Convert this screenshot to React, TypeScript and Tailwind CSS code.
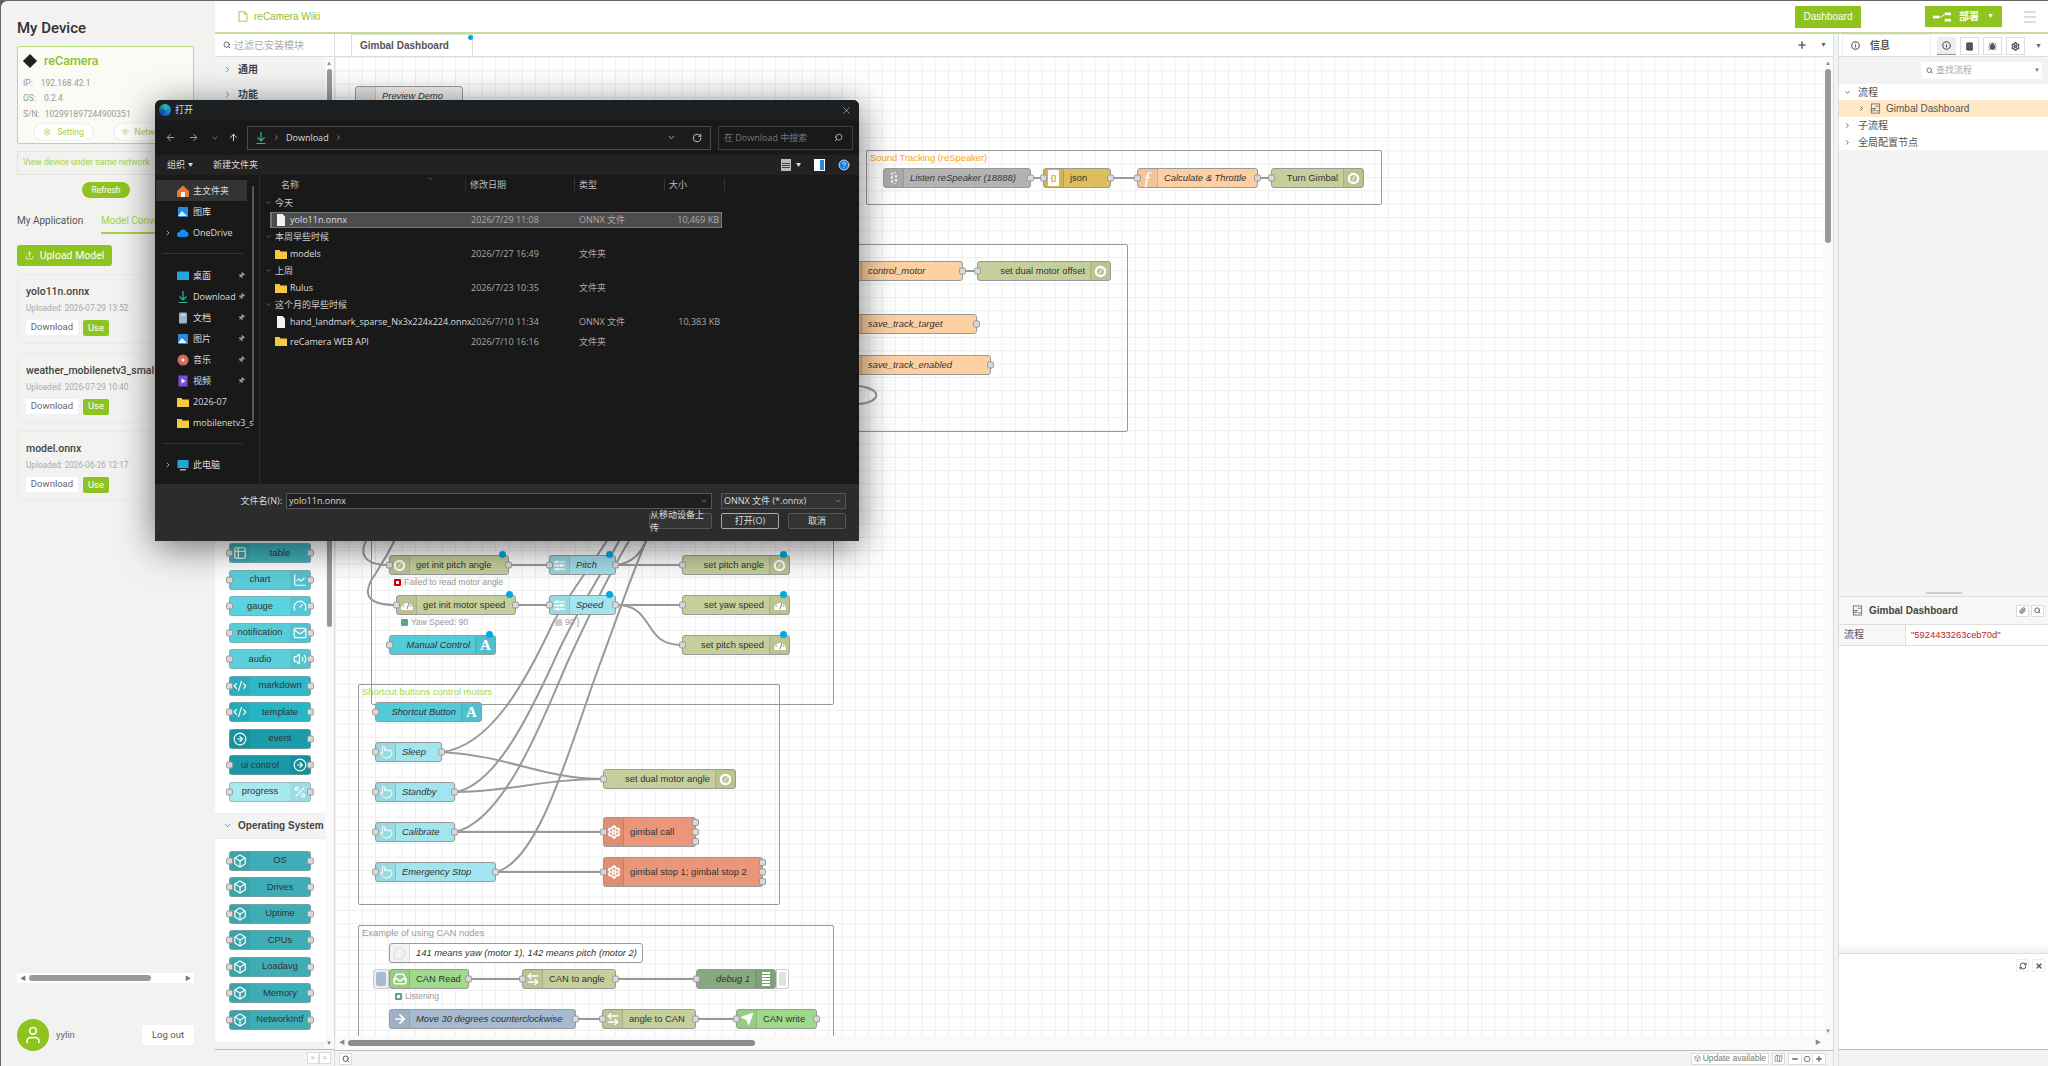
import React from "react";
import {
  ArrowLeft, ArrowLeftRight, ArrowRight, ArrowUp, Book, Box, Bug, ChartLine, ChevronDown, ChevronRight,
  CircleArrowRight, CircleHelp, CodeXml, Gauge, Inbox, Info, Mail, Map, MessageCircle, Minus, Paperclip, Percent,
  Pin, Plus, Pointer, RefreshCw, RotateCw, Search, Send, Settings, Table2, Upload, User, Volume2, Wifi, X,
} from "lucide-react";

const ORIGIN_X = 334;
const ORIGIN_Y = 56;

type IconName = "fn" | "json" | "mic" | "dial" | "gauge" | "sliders" | "text" | "hand" | "gear" | "swap" | "inbox" | "send" | "inject" | "comment" | "debug" | "none";

interface NodeDef {
  x: number;
  y: number;
  w: number;
  h?: number;
  label: string;
  color: string;
  icon: IconName;
  right?: boolean;
  italic?: boolean;
  hasIn?: boolean;
  outs?: number;
  changed?: boolean;
  dark?: boolean;
}

const nodes: NodeDef[] = [
  { x: 354, y: 85, w: 108, label: "Preview Demo", color: "#eeeeee", icon: "comment", italic: true, hasIn: false, outs: 0 },
  { x: 882, y: 167, w: 148, label: "Listen reSpeaker (18888)", color: "#b3b3b3", icon: "mic", italic: true, hasIn: false, outs: 1 },
  { x: 1042, y: 167, w: 68, label: "json", color: "#debd5c", icon: "json", hasIn: true, outs: 1 },
  { x: 1136, y: 167, w: 121, label: "Calculate & Throttle", color: "#fdd0a2", icon: "fn", italic: true, hasIn: true, outs: 1 },
  { x: 1270, y: 167, w: 93, label: "Turn Gimbal", color: "#c5cf9b", icon: "dial", right: true, hasIn: true, outs: 0 },
  { x: 840, y: 260, w: 122, label: "control_motor", color: "#fdd0a2", icon: "fn", italic: true, hasIn: true, outs: 1 },
  { x: 976, y: 260, w: 134, label: "set dual motor offset", color: "#c5cf9b", icon: "dial", right: true, hasIn: true, outs: 0 },
  { x: 840, y: 313, w: 136, label: "save_track_target", color: "#fdd0a2", icon: "fn", italic: true, hasIn: true, outs: 1 },
  { x: 840, y: 354, w: 150, label: "save_track_enabled", color: "#fdd0a2", icon: "fn", italic: true, hasIn: true, outs: 1 },
  { x: 388, y: 554, w: 120, label: "get init pitch angle", color: "#c5cf9b", icon: "dial", hasIn: true, outs: 1, changed: true },
  { x: 548, y: 554, w: 67, label: "Pitch", color: "#a2dfea", icon: "sliders", italic: true, hasIn: true, outs: 1, changed: true },
  { x: 681, y: 554, w: 108, label: "set pitch angle", color: "#c5cf9b", icon: "dial", right: true, hasIn: true, outs: 0, changed: true },
  { x: 395, y: 594, w: 120, label: "get init motor speed", color: "#c5cf9b", icon: "gauge", hasIn: true, outs: 1, changed: true },
  { x: 548, y: 594, w: 67, label: "Speed", color: "#a2e5ee", icon: "sliders", italic: true, hasIn: true, outs: 1, changed: true },
  { x: 681, y: 594, w: 108, label: "set yaw speed", color: "#c5cf9b", icon: "gauge", right: true, hasIn: true, outs: 0, changed: true },
  { x: 388, y: 634, w: 107, label: "Manual Control", color: "#54cbd9", icon: "text", right: true, italic: true, hasIn: true, outs: 0, changed: true },
  { x: 681, y: 634, w: 108, label: "set pitch speed", color: "#c5cf9b", icon: "gauge", right: true, hasIn: true, outs: 0, changed: true },
  { x: 374, y: 701, w: 107, label: "Shortcut Button", color: "#54cbd9", icon: "text", right: true, italic: true, hasIn: true, outs: 0 },
  { x: 374, y: 741, w: 67, label: "Sleep", color: "#a2e5ee", icon: "hand", italic: true, hasIn: true, outs: 1 },
  { x: 374, y: 781, w: 80, label: "Standby", color: "#a2e5ee", icon: "hand", italic: true, hasIn: true, outs: 1 },
  { x: 374, y: 821, w: 80, label: "Calibrate", color: "#a2e5ee", icon: "hand", italic: true, hasIn: true, outs: 1 },
  { x: 374, y: 861, w: 121, label: "Emergency Stop", color: "#a2e5ee", icon: "hand", italic: true, hasIn: true, outs: 1 },
  { x: 602, y: 768, w: 133, label: "set dual motor angle", color: "#c5cf9b", icon: "dial", right: true, hasIn: true, outs: 0 },
  { x: 602, y: 816, w: 93, h: 30, label: "gimbal call", color: "#e9967a", icon: "gear", hasIn: true, outs: 3 },
  { x: 602, y: 856, w: 160, h: 30, label: "gimbal stop 1; gimbal stop 2", color: "#e9967a", icon: "gear", hasIn: true, outs: 3 },
  { x: 388, y: 942, w: 254, label: "141 means yaw (motor 1), 142 means pitch (motor 2)", color: "#ffffff", icon: "comment", italic: true, hasIn: false, outs: 0 },
  { x: 388, y: 968, w: 80, label: "CAN Read", color: "#9fd98a", icon: "inbox", hasIn: false, outs: 1 },
  { x: 521, y: 968, w: 94, label: "CAN to angle", color: "#c5cf9b", icon: "swap", hasIn: true, outs: 1 },
  { x: 695, y: 968, w: 80, label: "debug 1", color: "#87a980", icon: "debug", right: true, italic: true, hasIn: true, outs: 0 },
  { x: 388, y: 1008, w: 187, label: "Move 30 degrees counterclockwise", color: "#a6bbcf", icon: "inject", italic: true, hasIn: false, outs: 1 },
  { x: 601, y: 1008, w: 94, label: "angle to CAN", color: "#c5cf9b", icon: "swap", hasIn: true, outs: 1 },
  { x: 735, y: 1008, w: 81, label: "CAN write", color: "#9fd98a", icon: "send", hasIn: true, outs: 1 },
];

const wires = [
  "M1030 177H1042", "M1110 177H1136", "M1257 177H1270", "M962 270H976",
  "M858 385C880 388 882 400 858 403",
  "M508 564H548", "M515 604H548", "M615 564H681", "M615 604H681",
  "M615 604C655 604 640 644 681 644",
  "M388 564C362 564 358 552 366 538",
  "M395 604C362 604 362 590 375 572C382 560 388 552 394 538",
  "M615 564C632 562 640 552 646 538",
  "M441 751C490 745 525 680 552 622C570 590 590 565 607 538",
  "M454 791C495 785 530 710 553 660C575 610 600 575 619 538",
  "M454 831C505 820 545 710 567 660C590 610 610 570 629 538",
  "M495 871C540 860 570 740 600 660C615 620 630 575 646 538",
  "M441 751C510 755 540 778 602 778", "M454 791C510 791 540 778 602 778",
  "M454 831H602", "M495 871H602",
  "M468 978H521", "M615 978H695", "M575 1018H601", "M695 1018H735",
];

const groups = [
  { x: 865, y: 149, w: 516, h: 55, label: "Sound Tracking (reSpeaker)", color: "text-[#f5a623]" },
  { x: 340, y: 243, w: 787, h: 188, label: "", color: "" },
  { x: 370, y: 500, w: 463, h: 204, label: "", color: "" },
  { x: 357, y: 683, w: 422, h: 221, label: "Shortcut buttons control motors", color: "text-[#a5d655]" },
  { x: 357, y: 924, w: 476, h: 140, label: "Example of using CAN nodes", color: "text-[#999999]" },
];

const statuses = [
  { x: 393, y: 580, square: "bg-[#ffffff] border-2 border-[#cc0000]", label: "Failed to read motor angle" },
  { x: 400, y: 620, square: "bg-[#5a8]", label: "Yaw Speed: 90" },
  { x: 554, y: 620, square: "bg-[#cccccc]", label: "90 ]" },
  { x: 394, y: 994, square: "bg-white border-2 border-[#5a8]", label: "Listening" },
];

function Dial() {
  return (
    <svg viewBox="0 0 14 14" className="h-[13px] w-[13px]">
      <circle cx="7" cy="7" r="5" fill="none" stroke="#fff" strokeWidth="2.4" />
      <path d="M5.5 9.5 8.5 4.5" stroke="#fff" strokeWidth="1" />
    </svg>
  );
}

function SpeedGauge() {
  return (
    <svg viewBox="0 0 14 14" className="h-[14px] w-[14px]">
      <path d="M1 11a6 6 0 1 1 12 0l-1 1H2z" fill="#fff" />
      <path d="M7 11 9 5" stroke="#999" strokeWidth="1.2" />
      <circle cx="3.5" cy="8" r=".8" fill="#999" />
      <circle cx="10.5" cy="8" r=".8" fill="#999" />
    </svg>
  );
}

function Sliders() {
  return (
    <svg viewBox="0 0 14 14" className="h-[13px] w-[13px]" stroke="#fff" strokeWidth="1.4">
      <path d="M1 3h12M1 7h12M1 11h12" />
      <path d="M4 1.5v3M9 5.5v3M5 9.5v3" strokeWidth="2.4" />
    </svg>
  );
}

function NodeIcon({ icon }: { icon: IconName }) {
  const cls = "h-[14px] w-[14px] text-white";
  switch (icon) {
    case "fn":
      return <span className="font-['Liberation_Serif',serif] text-[19px] italic leading-none text-white">ƒ</span>;
    case "json":
      return <span className="flex h-[16px] w-[11px] items-center justify-center rounded-[1px] bg-white text-[8px] font-bold text-[#c9a540]">{"{}"}</span>;
    case "mic":
      return <span className="h-[12px] w-[6px] rounded-full border-x-2 border-dotted border-white" />;
    case "dial":
      return <Dial />;
    case "gauge":
      return <SpeedGauge />;
    case "sliders":
      return <Sliders />;
    case "text":
      return <span className="font-['Liberation_Serif',serif] text-[15px] font-bold leading-none text-white">A</span>;
    case "hand":
      return <Pointer className={cls} strokeWidth={1.6} />;
    case "gear":
      return <Settings className={cls} strokeWidth={3} />;
    case "swap":
      return <ArrowLeftRight className={cls} strokeWidth={2.6} />;
    case "inbox":
      return <Inbox className={cls} strokeWidth={2.6} />;
    case "send":
      return <Send className={cls} fill="#fff" strokeWidth={1} />;
    case "inject":
      return <ArrowRight className={cls} strokeWidth={3} />;
    case "comment":
      return <MessageCircle className="h-[13px] w-[13px] text-[#dddddd]" />;
    case "debug":
      return (
        <span className="flex flex-col gap-[1.5px]">
          {[0, 1, 2, 3, 4].map((i) => (
            <span key={i} className="h-[1.5px] w-[8px] bg-white" />
          ))}
        </span>
      );
    default:
      return null;
  }
}

function Port({ className }: { className: string }) {
  return <span className={`absolute h-[7px] w-[7px] rounded-[2px] border border-[#999999] bg-[#d9d9d9] ${className}`} />;
}

function FlowNode({ node }: { node: NodeDef }) {
  const h = node.h ?? 20;
  const outs = node.outs ?? 0;
  const icon = (
    <span className={`flex h-full w-[20px] shrink-0 items-center justify-center bg-black/5 ${node.right ? "border-l" : "border-r"} border-black/10`}>
      <NodeIcon icon={node.icon} />
    </span>
  );
  return (
    <div
      className="absolute flex items-center rounded-[3px] border border-[#999999]"
      style={{ left: node.x - ORIGIN_X, top: node.y - ORIGIN_Y, width: node.w, height: h, backgroundColor: node.color }}
    >
      {!node.right && icon}
      <span className={`flex-1 truncate whitespace-nowrap text-[9.4px] text-[#333333] ${node.italic ? "italic" : ""} ${node.right ? "pr-[5px] text-right" : "pl-[6px]"}`}>
        {node.label}
      </span>
      {node.right && icon}
      {node.hasIn && <Port className="left-[-4px] top-1/2 -translate-y-1/2" />}
      {outs === 1 && <Port className="right-[-4px] top-1/2 -translate-y-1/2" />}
      {outs === 3 && (
        <>
          <Port className="right-[-4px] top-[1px]" />
          <Port className="right-[-4px] top-1/2 -translate-y-1/2" />
          <Port className="right-[-4px] bottom-[1px]" />
        </>
      )}
      {node.changed && <span className="absolute right-[2px] top-[-5px] h-[7px] w-[7px] rounded-full bg-[#00a8e8]" />}
    </div>
  );
}

function Canvas() {
  return (
    <div className="relative flex-1 overflow-hidden bg-white bg-[linear-gradient(#eeeeee_1px,transparent_1px),linear-gradient(90deg,#eeeeee_1px,transparent_1px)] bg-[size:13.34px_13.34px]">
      {groups.map((g) => (
        <div
          key={`${g.x}-${g.y}`}
          className="absolute rounded-[2px] border border-[#999999] px-[3px] text-[9.4px] leading-[14px]"
          style={{ left: g.x - ORIGIN_X, top: g.y - ORIGIN_Y, width: g.w, height: g.h }}
        >
          <span className={g.color}>{g.label}</span>
        </div>
      ))}
      <svg className="absolute left-0 top-0" width="1488" height="980" viewBox={`${ORIGIN_X} ${ORIGIN_Y} 1488 980`} fill="none" stroke="#999999" strokeWidth="2">
        {wires.map((d) => (
          <path key={d} d={d} />
        ))}
      </svg>
      {nodes.map((n) => (
        <FlowNode key={n.label + n.x} node={n} />
      ))}
      {statuses.map((s) => (
        <div key={s.label} className="absolute flex items-center gap-[3px] text-[8.5px] text-[#999999]" style={{ left: s.x - ORIGIN_X, top: s.y - ORIGIN_Y - 5 }}>
          <span className={`h-[7px] w-[7px] rounded-[1px] ${s.square}`} />
          {s.label}
        </div>
      ))}
      <span className="absolute left-[38px] top-[912px] h-[20px] w-[16px] rounded-l-[3px] border border-[#cccccc] bg-[#eeeeee] p-[2px]">
        <span className="block h-full w-full rounded-[2px] bg-[#a6bbcf]" />
      </span>
      <span className="absolute left-[441px] top-[912px] h-[20px] w-[13px] rounded-r-[3px] border border-[#cccccc] bg-white p-[2px]">
        <span className="block h-full w-full rounded-[2px] bg-[#dbe5d8]" />
      </span>
    </div>
  );
}

const paletteA = [
  { label: "table", color: "bg-[#3fb0bb]", Icon: Table2, left: true, ins: true },
  { label: "chart", color: "bg-[#5accd8]", Icon: ChartLine, left: false, ins: true },
  { label: "gauge", color: "bg-[#5ad2df]", Icon: Gauge, left: false, ins: true },
  { label: "notification", color: "bg-[#55ced9]", Icon: Mail, left: false, ins: true },
  { label: "audio", color: "bg-[#5bcfdb]", Icon: Volume2, left: false, ins: true },
  { label: "markdown", color: "bg-[#2fb7c8]", Icon: CodeXml, left: true, ins: true },
  { label: "template", color: "bg-[#25b5c4]", Icon: CodeXml, left: true, ins: true },
  { label: "event", color: "bg-[#1b9aa9]", Icon: CircleArrowRight, left: true, ins: false },
  { label: "ui control", color: "bg-[#1898a8]", Icon: CircleArrowRight, left: false, ins: true },
  { label: "progress", color: "bg-[#a8e8ef]", Icon: Percent, left: false, ins: true },
];

const paletteB = ["OS", "Drives", "Uptime", "CPUs", "Loadavg", "Memory", "NetworkIntf"];

function PaletteNode({ label, color, Icon, left, ins }: { label: string; color: string; Icon: typeof Box; left: boolean; ins: boolean }) {
  const icon = (
    <span className={`flex h-full w-[20px] shrink-0 items-center justify-center bg-black/5 ${left ? "rounded-l-[3px]" : "rounded-r-[3px]"}`}>
      <Icon className="h-[14px] w-[14px] text-white" strokeWidth={2} />
    </span>
  );
  return (
    <div className={`relative mx-[14px] flex h-[20px] w-[82px] shrink-0 items-center rounded-[3px] border border-[#999999]/60 ${color}`}>
      {left && icon}
      <span className="flex-1 whitespace-nowrap text-center text-[9.4px] text-[#333333]">{label}</span>
      {!left && icon}
      {ins && <Port className="left-[-4px] top-1/2 -translate-y-1/2" />}
      <Port className="right-[-4px] top-1/2 -translate-y-1/2" />
    </div>
  );
}

function PaletteHeader({ label, open }: { label: string; open?: boolean }) {
  const Chevron = open ? ChevronDown : ChevronRight;
  return (
    <div className="flex h-[26px] shrink-0 items-center gap-[6px] border-y border-[#eeeeee] bg-[#f3f3f3] pl-[8px] text-[10px] font-bold text-[#444444]">
      <Chevron className="h-[9px] w-[9px] text-[#666666]" />
      {label}
    </div>
  );
}

function Palette() {
  return (
    <div className="flex w-[120px] shrink-0 flex-col border-r border-[#dddddd] bg-white">
      <div className="flex h-[23px] items-center gap-[3px] border-b border-[#dddddd] pl-[8px] text-[10px] text-[#aaaaaa]">
        <Search className="h-[8px] w-[8px] text-[#666666]" strokeWidth={3} />
        过滤已安装模块
      </div>
      <div className="relative flex flex-1 overflow-hidden">
        <div className="flex h-[995px] w-[110px] flex-col overflow-hidden">
          <div className="flex h-[25px] shrink-0 items-center gap-[6px] border-b border-[#eeeeee] bg-[#f3f3f3] pl-[8px] text-[10px] font-bold text-[#444444]">
            <ChevronRight className="h-[9px] w-[9px] text-[#666666]" />
            通用
          </div>
          <div className="flex h-[26px] shrink-0 items-center gap-[6px] border-b border-[#eeeeee] bg-[#f3f3f3] pl-[8px] text-[10px] font-bold text-[#444444]">
            <ChevronRight className="h-[9px] w-[9px] text-[#666666]" />
            功能
          </div>
          <div className="mt-[435px] flex flex-col gap-[6.5px]">
            {paletteA.map((p) => (
              <PaletteNode key={p.label} {...p} />
            ))}
          </div>
          <div className="mt-[11px]">
            <PaletteHeader label="Operating System" open />
          </div>
          <div className="mt-[12px] flex flex-col gap-[6.5px]">
            {paletteB.map((label) => (
              <PaletteNode key={label} label={label} color="bg-[#3fadb5]" Icon={Box} left ins />
            ))}
          </div>
          <div className="mt-[12px]">
            <PaletteHeader label="CAN Bus" open />
          </div>
        </div>
        <div className="relative flex-1 bg-[#fafafa]">
          <span className="absolute left-[2px] top-[12px] h-[558px] w-[5px] rounded-full bg-[#999999]" />
          <span className="absolute left-[1px] top-[3px] text-[6px] leading-none text-[#888888]">▲</span>
          <span className="absolute bottom-[3px] left-[1px] text-[6px] leading-none text-[#888888]">▼</span>
        </div>
      </div>
      <div className="flex h-[17px] items-center justify-end gap-0 border-t border-[#bbbbbb] bg-[#f3f3f3] pr-[3px]">
        <span className="flex h-[12px] w-[12px] items-center justify-center border border-[#dddddd] bg-white text-[7px] text-[#999999]">≈</span>
        <span className="flex h-[12px] w-[12px] items-center justify-center border border-[#dddddd] bg-white text-[7px] text-[#999999]">≈</span>
      </div>
    </div>
  );
}

function Workspace() {
  return (
    <div className="flex w-[1498px] shrink-0 flex-col">
      <div className="flex h-[23px] shrink-0 items-end border-b border-[#dddddd] bg-white">
        <div className="relative ml-[16px] flex h-[22px] w-[122px] items-center border-x border-t border-[#dddddd] bg-white pl-[8px] text-[10px] font-bold text-[#555555]">
          Gimbal Dashboard
          <span className="absolute right-[-1px] top-[0px] h-[5px] w-[5px] rounded-full bg-[#00a8e8]" />
        </div>
        <div className="ml-auto flex h-[22px] items-center gap-[13px] pr-[6px] text-[#666666]">
          <Plus className="h-[10px] w-[10px]" strokeWidth={4} />
          <span className="text-[7px]">▼</span>
        </div>
      </div>
      <div className="relative flex flex-1 overflow-hidden">
        <Canvas />
        <div className="relative w-[10px] shrink-0 bg-[#fafafa]">
          <span className="absolute left-[2px] top-[12px] h-[174px] w-[6px] rounded-full bg-[#999999]" />
          <span className="absolute left-[2px] top-[3px] text-[6px] leading-none text-[#888888]">▲</span>
          <span className="absolute bottom-[2px] left-[2px] text-[6px] leading-none text-[#888888]">▼</span>
        </div>
      </div>
      <div className="relative h-[14px] shrink-0 bg-[#fafafa]">
        <span className="absolute left-[4px] top-[3px] text-[6px] leading-none text-[#888888]">◀</span>
        <span className="absolute left-[13px] top-[4px] h-[6px] w-[407px] rounded-full bg-[#8c8c8c]" />
        <span className="absolute left-[1480px] top-[3px] text-[6px] leading-none text-[#888888]">▶</span>
      </div>
      <div className="flex h-[16px] shrink-0 items-center border-t border-[#bbbbbb] bg-[#f3f3f3] pr-[7px]">
        <span className="ml-[4px] flex h-[12px] w-[13px] items-center justify-center border border-[#dddddd] bg-white">
          <Search className="h-[8px] w-[8px] text-[#555555]" strokeWidth={3} />
        </span>
        <span className="ml-auto flex h-[12px] items-center gap-[2px] border border-[#dddddd] bg-white px-[2px] text-[8.5px] text-[#777777]">
          <Box className="h-[7px] w-[7px]" />
          Update available
        </span>
        <span className="ml-[3px] flex h-[12px] w-[13px] items-center justify-center border border-[#dddddd] bg-white">
          <Map className="h-[9px] w-[9px] text-[#777777]" />
        </span>
        <span className="ml-[3px] flex h-[12px] items-center border border-[#dddddd] bg-white text-[#666666]">
          <Minus className="mx-[2px] h-[8px] w-[8px]" strokeWidth={4} />
          <span className="w-[12px] border-x border-[#dddddd] text-center text-[9px] leading-[10px]">O</span>
          <Plus className="mx-[2px] h-[8px] w-[8px]" strokeWidth={4} />
        </span>
      </div>
    </div>
  );
}

function FlowIcon({ className }: { className: string }) {
  return (
    <svg viewBox="0 0 12 12" className={className} fill="none" stroke="#777777" strokeWidth="1">
      <rect x="1.5" y="1" width="9" height="10" />
      <path d="M6 3.5h4.5M1.5 6h5M6 8.5h4.5" />
      <rect x="1.5" y="6" width="3" height="2.5" />
    </svg>
  );
}

function RightSidebar() {
  const tabBtn = "flex h-[18px] w-[19px] items-center justify-center border border-[#dddddd] bg-white text-[#555555]";
  return (
    <div className="flex w-[210px] shrink-0 flex-col text-[10px] text-[#555555]">
      <div className="flex h-[23px] shrink-0 items-end border-b border-[#dddddd] pl-[3px]">
        <div className="flex h-[22px] w-[89px] items-center gap-[10px] border-x border-t border-[#eeeeee] bg-white pl-[8px] font-bold">
          <Info className="h-[9px] w-[9px]" strokeWidth={3} />
          信息
        </div>
        <div className="ml-[6px] flex gap-[4px] pb-[1px]">
          <span className="flex h-[18px] w-[19px] items-center justify-center border-b border-[#999999] bg-[#eeeeee] text-[#555555]">
            <Info className="h-[9px] w-[9px]" strokeWidth={3} />
          </span>
          <span className={tabBtn}><Book className="h-[9px] w-[9px]" fill="#555555" /></span>
          <span className={tabBtn}><Bug className="h-[9px] w-[9px]" fill="#555555" /></span>
          <span className={tabBtn}><Settings className="h-[9px] w-[9px]" strokeWidth={3.4} /></span>
        </div>
        <span className="ml-[10px] pb-[5px] text-[7px] text-[#666666]">▼</span>
      </div>
      <div className="flex h-[27px] shrink-0 items-center justify-end bg-[#f3f3f3] pr-[7px]">
        <div className="flex h-[17px] w-[121px] items-center gap-[3px] rounded-[2px] bg-white pl-[5px] text-[9px] text-[#aaaaaa]">
          <Search className="h-[7px] w-[7px] text-[#666666]" strokeWidth={3} />
          查找流程
          <span className="ml-auto pr-[2px] text-[6px] text-[#777777]">▼</span>
        </div>
      </div>
      <div className="flex h-[66px] shrink-0 flex-col bg-white">
        <div className="flex h-[16px] items-center gap-[7px] pl-[5px]">
          <ChevronDown className="h-[7px] w-[7px]" strokeWidth={3} />
          流程
        </div>
        <div className="flex h-[17px] items-center gap-[5px] bg-[#ffe8c7] pl-[19px]">
          <ChevronRight className="h-[7px] w-[7px]" strokeWidth={3} />
          <FlowIcon className="h-[11px] w-[11px]" />
          Gimbal Dashboard
        </div>
        <div className="flex h-[17px] items-center gap-[7px] pl-[5px]">
          <ChevronRight className="h-[7px] w-[7px]" strokeWidth={3} />
          子流程
        </div>
        <div className="flex h-[16px] items-center gap-[7px] pl-[5px]">
          <ChevronRight className="h-[7px] w-[7px]" strokeWidth={3} />
          全局配置节点
        </div>
      </div>
      <div className="flex h-[446px] shrink-0 items-end justify-center bg-[#f3f3f3]">
        <span className="mb-[2px] h-[2px] w-[36px] bg-[#cccccc]" />
      </div>
      <div className="flex h-[29px] shrink-0 items-center gap-[6px] border-y border-[#dddddd] bg-[#f7f7f7] pl-[13px] pr-[5px]">
        <FlowIcon className="h-[13px] w-[11px]" />
        <span className="font-bold text-[#444444]">Gimbal Dashboard</span>
        <span className="ml-auto flex h-[12px] w-[13px] items-center justify-center border border-[#dddddd] bg-white">
          <Paperclip className="h-[7px] w-[7px]" strokeWidth={3} />
        </span>
        <span className="ml-[-4px] flex h-[12px] w-[13px] items-center justify-center border border-[#dddddd] bg-white">
          <Search className="h-[7px] w-[7px]" strokeWidth={3} />
        </span>
      </div>
      <div className="flex h-[21px] shrink-0 border-b border-[#dddddd]">
        <span className="flex w-[67px] items-start border-r border-[#dddddd] bg-[#f7f7f7] pl-[5px] pt-[2px]">流程</span>
        <span className="flex-1 pl-[5px] pt-[3px] text-[9.4px] text-[#bb2222]">"5924433263ceb70d"</span>
      </div>
      <div className="h-[307px] shrink-0 bg-[linear-gradient(#ffffff_97%,#f0f0f0)]" />
      <div className="flex flex-1 items-start justify-end gap-[3px] border-t border-[#dddddd] bg-white pr-[4px] pt-[5px]">
        <span className="flex h-[13px] w-[13px] items-center justify-center border border-[#eeeeee]">
          <RefreshCw className="h-[8px] w-[8px]" strokeWidth={3} />
        </span>
        <span className="flex h-[13px] w-[13px] items-center justify-center border border-[#eeeeee]">
          <X className="h-[8px] w-[8px]" strokeWidth={4} />
        </span>
      </div>
      <div className="h-[17px] shrink-0 border-t border-[#bbbbbb] bg-[#f3f3f3]" />
    </div>
  );
}

function Header() {
  return (
    <div className="flex h-[33px] shrink-0 items-center border-b-2 border-[#c4dd97] bg-white">
      <div className="ml-[23px] flex items-center gap-[6px] text-[10px] text-[#8fc31f]">
        <svg viewBox="0 0 12 14" className="h-[11px] w-[10px]" fill="none" stroke="#a5d14a" strokeWidth="1.3">
          <path d="M1 1h7l3 3v9H1zM8 1v3h3" />
        </svg>
        reCamera Wiki
      </div>
      <div className="ml-auto flex h-[22px] w-[66px] items-center justify-center bg-[#8fc31f] text-[10px] text-white">Dashboard</div>
      <div className="ml-[64px] flex h-[21px] w-[77px] items-center justify-center gap-[8px] bg-[#8fc31f] text-[10px] font-bold text-white">
        <svg viewBox="0 0 20 10" className="h-[10px] w-[18px]" fill="#fff">
          <rect x="0" y="3.5" width="7" height="3" />
          <rect x="13" y="0" width="7" height="3" />
          <rect x="13" y="7" width="7" height="3" />
          <path d="M7 4.5h2l4-3v1l-4 3H7z" />
        </svg>
        部署
        <span className="text-[7px]">▼</span>
      </div>
      <div className="ml-[22px] mr-[12px] flex w-[12px] flex-col gap-[3px]">
        <span className="h-[2px] bg-[#dddddd]" />
        <span className="h-[2px] bg-[#dddddd]" />
        <span className="h-[2px] bg-[#dddddd]" />
      </div>
    </div>
  );
}

const models = [
  { name: "yolo11n.onnx", date: "2026-07-29 13:52" },
  { name: "weather_mobilenetv3_small.onnx", date: "2026-07-29 10:40" },
  { name: "model.onnx", date: "2026-06-26 12:17" },
];

function LeftPanel() {
  return (
    <aside className="flex w-[214px] shrink-0 flex-col overflow-hidden rounded-tl-[6px] bg-[#f2f2f0] pl-[16px] pr-[21px] font-['Roboto','Noto_Sans_CJK_SC',sans-serif]">
      <h1 className="mt-[18px] h-[27px] text-[15px] font-medium leading-[18px] text-[#333333]">My Device</h1>
      <div className="h-[98px] w-[177px] shrink-0 rounded-[2px] border border-[#b9dc7c] bg-[#f9fbf4] px-[5px]">
        <div className="flex h-[28px] items-center gap-[9px]">
          <span className="ml-[2px] h-[10px] w-[10px] rotate-45 bg-[#222222]" />
          <span className="text-[12.5px] font-medium text-[#8fc31f]">reCamera</span>
        </div>
        <div className="flex h-[16px] items-center gap-[8px] text-[8.5px] text-[#999999]"><span>IP:</span><span>192.168.42.1</span></div>
        <div className="flex h-[15px] items-center gap-[8px] text-[8.5px] text-[#999999]"><span>OS:</span><span>0.2.4</span></div>
        <div className="flex h-[16px] items-center gap-[5px] text-[8.5px] text-[#999999]"><span>S/N:</span><span>102991897244900351</span></div>
        <div className="mt-[2px] flex gap-[21px] pl-[11px]">
          <span className="flex h-[16px] w-[59px] items-center justify-center gap-[6px] rounded-full bg-white text-[8.5px] text-[#a5d14a] shadow-[0_0_1px_#bbbbbb]">
            <Settings className="h-[8px] w-[8px]" />
            Setting
          </span>
          <span className="flex h-[16px] w-[59px] items-center justify-center gap-[6px] rounded-full bg-white text-[8.5px] text-[#a5d14a] shadow-[0_0_1px_#bbbbbb]">
            <Wifi className="h-[8px] w-[8px]" />
            Network
          </span>
        </div>
      </div>
      <div className="mt-[7px] flex h-[24px] w-[177px] shrink-0 items-center rounded-[2px] border border-[#e2e2e0] pl-[5px] text-[8.7px] text-[#a5d14a]">
        View device under same network
      </div>
      <div className="mt-[7px] flex h-[16px] w-[48px] shrink-0 items-center justify-center self-start rounded-full bg-[#8fc31f] ml-[65px] text-[8.5px] text-white">Refresh</div>
      <div className="mt-[14px] flex h-[22px] w-[177px] shrink-0">
        <span className="w-[84px] pt-[1px] text-[10px] text-[#555555]">My Application</span>
        <span className="flex-1 whitespace-nowrap border-b-2 border-[#a5d14a] pt-[1px] text-[10px] text-[#a5d14a]">Model Conversion</span>
      </div>
      <div className="mt-[11px] flex h-[21px] w-[95px] shrink-0 items-center justify-center gap-[6px] rounded-[3px] bg-[#8fc31f] text-[10.5px] text-white">
        <Upload className="h-[9px] w-[9px]" />
        Upload Model
      </div>
      <div className="mt-[8px] flex flex-col gap-[8.5px]">
        {models.map((m) => (
          <div key={m.name} className="h-[70px] w-[177px] overflow-hidden rounded-[2px] border border-[#ebebe9] px-[8px] pt-[10px]">
            <div className="truncate text-[10.5px] font-medium leading-[14px] text-[#444444]">{m.name}</div>
            <div className="mt-[4px] text-[8.2px] leading-[10px] text-[#aaaaaa]">Uploaded: {m.date}</div>
            <div className="mt-[7px] flex gap-[5px]">
              <span className="flex h-[15px] w-[52px] items-center justify-center rounded-[1px] bg-white text-[9.5px] text-[#666666]">Download</span>
              <span className="flex h-[16px] w-[26px] items-center justify-center rounded-[2px] bg-[#8fc31f] text-[9.5px] text-white">Use</span>
            </div>
          </div>
        ))}
      </div>
      <div className="relative mt-auto flex h-[10px] w-[177px] shrink-0 items-center bg-white">
        <span className="absolute left-[3px] text-[6px] leading-none text-[#777777]">◀</span>
        <span className="absolute left-[12px] h-[6px] w-[122px] rounded-full bg-[#999999]" />
        <span className="absolute right-[3px] text-[6px] leading-none text-[#777777]">▶</span>
      </div>
      <div className="mb-[15px] mt-[36px] flex h-[32px] w-[177px] shrink-0 items-center">
        <span className="flex h-[32px] w-[32px] items-center justify-center rounded-full bg-[#8fc31f]">
          <User className="h-[20px] w-[20px] text-white" />
        </span>
        <span className="ml-[7px] text-[9.5px] text-[#666666]">yylin</span>
        <span className="ml-auto flex h-[20px] w-[52px] items-center justify-center rounded-[3px] bg-white text-[9.5px] text-[#555555]">Log out</span>
      </div>
    </aside>
  );
}

type WinIcon = "home" | "pic" | "cloud" | "desk" | "down" | "doc" | "music" | "video" | "folder" | "pc" | "file";

function Win({ icon }: { icon: WinIcon }) {
  const c = "h-[12px] w-[12px] shrink-0";
  switch (icon) {
    case "home":
      return <svg viewBox="0 0 12 12" className={c}><path d="M6 .5 12 6v6H0V6z" fill="#e8793a" /><rect x="4" y="7" width="4" height="5" fill="#f5f5f5" /></svg>;
    case "pic":
      return <svg viewBox="0 0 12 12" className={c}><rect x="1" y="1" width="10" height="10" rx="1" fill="#2a88e0" /><path d="M1 10 5 5l5 5z" fill="#dff0ff" /></svg>;
    case "cloud":
      return <svg viewBox="0 0 12 12" className={c}><path d="M2.5 10a2.5 2.5 0 0 1 0-5 3.5 3.5 0 0 1 6.6-.5A2.8 2.8 0 0 1 9.5 10z" fill="#1a8cf0" /></svg>;
    case "desk":
      return <svg viewBox="0 0 12 12" className={c}><rect x="0" y="1.5" width="12" height="8.5" fill="#22a6d8" /></svg>;
    case "down":
      return <svg viewBox="0 0 12 12" className={c} fill="none" stroke="#2fb59a" strokeWidth="1.2"><path d="M6 0v9M2.5 5.5 6 9l3.5-3.5M1.5 11.5h9" /></svg>;
    case "doc":
      return <svg viewBox="0 0 12 12" className={c}><rect x="2" y="0.5" width="8" height="11" rx="1" fill="#9eb2c6" /><path d="M4 3h4" stroke="#fff" /></svg>;
    case "music":
      return <svg viewBox="0 0 12 12" className={c}><circle cx="6" cy="6" r="5.5" fill="#d86a5a" /><circle cx="6" cy="6" r="1.5" fill="#fff" /></svg>;
    case "video":
      return <svg viewBox="0 0 12 12" className={c}><rect x="1.5" y="0.5" width="9" height="11" fill="#7a4fe0" /><path d="M4.5 3.5v5l4-2.5z" fill="#fff" /></svg>;
    case "folder":
      return <svg viewBox="0 0 12 12" className={c}><path d="M0 2h4.5l1 1.5H12V11H0z" fill="#f5c842" /></svg>;
    case "pc":
      return <svg viewBox="0 0 12 12" className={c}><rect x="0.5" y="1" width="11" height="8" fill="#22a6d8" /><rect x="3" y="10" width="6" height="1.5" fill="#8fb8cc" /></svg>;
    default:
      return <svg viewBox="0 0 12 12" className={c}><path d="M2 0h5.5L10 2.5V12H2z" fill="#f2f2f2" /></svg>;
  }
}

const navItems: { label: string; icon: WinIcon; pin?: boolean; chev?: boolean; active?: boolean; mt?: string }[] = [
  { label: "主文件夹", icon: "home", active: true },
  { label: "图库", icon: "pic" },
  { label: "OneDrive", icon: "cloud", chev: true },
  { label: "桌面", icon: "desk", pin: true, mt: "mt-[22px]" },
  { label: "Download", icon: "down", pin: true },
  { label: "文档", icon: "doc", pin: true },
  { label: "图片", icon: "pic", pin: true },
  { label: "音乐", icon: "music", pin: true },
  { label: "视频", icon: "video", pin: true },
  { label: "2026-07", icon: "folder" },
  { label: "mobilenetv3_s", icon: "folder" },
  { label: "此电脑", icon: "pc", chev: true, mt: "mt-[21px]" },
];

const fileRows: { group?: string; name?: string; date?: string; type?: string; size?: string; icon?: WinIcon; selected?: boolean; h?: string }[] = [
  { group: "今天" },
  { name: "yolo11n.onnx", date: "2026/7/29 11:08", type: "ONNX 文件", size: "10,469 KB", icon: "file", selected: true },
  { group: "本周早些时候" },
  { name: "models", date: "2026/7/27 16:49", type: "文件夹", icon: "folder" },
  { group: "上周" },
  { name: "Rulus", date: "2026/7/23 10:35", type: "文件夹", icon: "folder" },
  { group: "这个月的早些时候" },
  { name: "hand_landmark_sparse_Nx3x224x224.onnx", date: "2026/7/10 11:34", type: "ONNX 文件", size: "10,383 KB", icon: "file" },
  { name: "reCamera WEB API", date: "2026/7/10 16:16", type: "文件夹", icon: "folder", h: "mt-[3px]" },
];

function FileDialog() {
  const chrome = "text-[#e6e6e6]";
  return (
    <div className="absolute left-[154px] top-[99px] z-10 flex h-[441px] w-[704px] flex-col overflow-hidden rounded-t-[6px] bg-[#191919] font-['Open_Sans','Noto_Sans_CJK_SC',sans-serif] text-[9px] text-[#dddddd] shadow-[0_6px_36px_rgba(0,0,0,0.55)]">
      <div className="flex h-[20px] shrink-0 items-center bg-[#1c2023] pl-[4px] pr-[7px]">
        <span className="h-[12px] w-[12px] rounded-full bg-[conic-gradient(#27c0a0,#1a7fd8,#0a4fa8,#27c0a0)]" />
        <span className="ml-[4px]">打开</span>
        <X className="ml-auto h-[11px] w-[11px] text-[#dddddd]" strokeWidth={1.2} />
      </div>
      <div className="flex h-[35px] shrink-0 items-center bg-[#191919] pl-[10px]">
        <ArrowLeft className={`h-[11px] w-[11px] ${chrome} opacity-70`} />
        <ArrowRight className={`ml-[12px] h-[11px] w-[11px] ${chrome} opacity-70`} />
        <ChevronDown className={`ml-[12px] h-[8px] w-[8px] ${chrome} opacity-70`} />
        <ArrowUp className={`ml-[9px] h-[11px] w-[11px] ${chrome}`} />
        <div className="ml-[8px] flex h-[24px] w-[464px] items-center gap-[6px] border border-[#4a4a4a] bg-[#1c1c1c] pl-[7px] pr-[8px]">
          <Win icon="down" />
          <ChevronRight className="h-[7px] w-[7px]" />
          Download
          <ChevronRight className="h-[7px] w-[7px]" />
          <ChevronDown className="ml-auto h-[9px] w-[9px]" />
          <RotateCw className="ml-[10px] h-[10px] w-[10px]" />
        </div>
        <div className="ml-[7px] flex h-[24px] w-[135px] items-center border border-[#3c3c3c] pl-[5px] pr-[9px] text-[#777777]">
          在 Download 中搜索
          <Search className="ml-auto h-[9px] w-[9px] -scale-x-100 text-[#cccccc]" />
        </div>
      </div>
      <div className="flex h-[20px] shrink-0 items-center bg-[#222222] pl-[12px] pr-[9px]">
        组织 <span className="ml-[3px] text-[5px]">▼</span>
        <span className="ml-[20px]">新建文件夹</span>
        <span className="ml-auto flex h-[12px] w-[10px] flex-col justify-center gap-[1px] bg-[#bbbbbb] px-[1px]">
          <span className="h-[1px] bg-[#444444]" />
          <span className="h-[1px] bg-[#444444]" />
          <span className="h-[1px] bg-[#444444]" />
        </span>
        <span className="ml-[5px] text-[5px]">▼</span>
        <span className="ml-[13px] flex h-[12px] w-[11px] justify-end border border-white bg-white">
          <span className="w-[4px] bg-[#2a88e0]" />
        </span>
        <CircleHelp className="ml-[13px] h-[12px] w-[12px] text-white" fill="#1a7fe0" strokeWidth={1.5} />
      </div>
      <div className="flex min-h-0 flex-1">
        <div className="relative w-[105px] shrink-0 border-r border-[#2c2c2c] pl-[1px] pt-[5px]">
          <span className="absolute left-[97px] top-[11px] h-[235px] w-[2px] bg-[#555555]" />
          {navItems.map((n, i) => (
            <React.Fragment key={n.label + i}>
              {n.mt && <div className={`ml-[6px] h-px w-[81px] bg-[#333333] ${n.mt === "mt-[22px]" ? "mt-[10px] mb-[11px]" : "mt-[10px] mb-[10px]"}`} />}
              <div className={`relative flex h-[21px] w-[91px] items-center gap-[4px] pl-[21px] ${n.active ? "bg-[#333333]" : ""}`}>
                {n.chev && <ChevronRight className="absolute left-[8px] h-[8px] w-[8px]" />}
                <Win icon={n.icon} />
                <span className="whitespace-nowrap">{n.label}</span>
                {n.pin && <Pin className="absolute right-[2px] h-[7px] w-[7px] rotate-45 text-[#999999]" fill="#999999" />}
              </div>
            </React.Fragment>
          ))}
        </div>
        <div className="relative min-w-0 flex-1">
          <div className="flex h-[19px] items-center text-[#bbbbbb]">
            <span className="w-[205px] pl-[21px]">名称</span>
            <span className="w-[109px] border-l border-[#333333] pl-[4px]">修改日期</span>
            <span className="w-[90px] border-l border-[#333333] pl-[4px]">类型</span>
            <span className="w-[61px] border-x border-[#333333] pl-[4px]">大小</span>
          </div>
          <ChevronDown className="absolute left-[167px] top-[0px] h-[7px] w-[7px] text-[#888888]" />
          <div className="flex flex-col">
            {fileRows.map((r, i) =>
              r.group ? (
                <div key={i} className="flex h-[17.5px] items-center gap-[3px] pl-[5px] text-[#cccccc]">
                  <ChevronDown className="h-[7px] w-[7px] text-[#888888]" />
                  {r.group}
                </div>
              ) : (
                <div
                  key={i}
                  className={`ml-[10px] flex h-[16.5px] w-[452px] items-center border-l-2 ${r.h ?? ""} ${r.selected ? "border border-l-[2px] border-[#777777] bg-[#4d4d4d]" : "border-transparent"}`}
                >
                  <span className="flex w-[195px] items-center gap-[3px] whitespace-nowrap pl-[3px]">
                    <Win icon={r.icon ?? "file"} />
                    {r.name}
                  </span>
                  <span className="w-[108px] whitespace-nowrap pl-[4px] text-[#aaaaaa]">{r.date}</span>
                  <span className="w-[70px] whitespace-nowrap pl-[4px] text-[#aaaaaa]">{r.type}</span>
                  <span className="flex-1 whitespace-nowrap pr-[2px] text-right text-[#aaaaaa]">{r.size}</span>
                </div>
              ),
            )}
          </div>
        </div>
      </div>
      <div className="flex h-[57px] shrink-0 flex-col bg-[#2c2c2c] pr-[13px] pt-[9px]">
        <div className="flex h-[16px] items-center justify-end">
          <span className="mr-[4px]">文件名(N):</span>
          <div className="flex h-[16px] w-[426px] items-center justify-between border border-[#555555] bg-[#1f1f1f] pl-[2px] pr-[3px]">
            yolo11n.onnx
            <ChevronDown className="h-[8px] w-[8px] text-[#999999]" />
          </div>
          <div className="ml-[9px] flex h-[16px] w-[125px] items-center justify-between border border-[#555555] bg-[#333333] pl-[2px] pr-[3px]">
            ONNX 文件 (*.onnx)
            <ChevronDown className="h-[8px] w-[8px] text-[#999999]" />
          </div>
        </div>
        <div className="mt-[4px] flex justify-end gap-[9px]">
          <span className="flex h-[16px] w-[63px] items-center justify-center rounded-[2px] border border-[#555555] bg-[#333333]">从移动设备上传</span>
          <span className="flex h-[16px] w-[58px] items-center justify-center rounded-[2px] border border-[#aaaaaa] bg-[#333333]">打开(O)</span>
          <span className="flex h-[16px] w-[58px] items-center justify-center rounded-[2px] border border-[#555555] bg-[#333333]">取消</span>
        </div>
      </div>
    </div>
  );
}

export default function App() {
  return (
    <div className="relative flex h-[1066px] w-[2048px] overflow-hidden border-l border-t border-[#666666] bg-[#555555] font-['Liberation_Sans','Noto_Sans_CJK_SC',sans-serif]">
      <LeftPanel />
      <div className="flex min-w-0 flex-1 flex-col bg-white">
        <Header />
        <div className="flex min-h-0 flex-1">
          <Palette />
          <Workspace />
          <div className="w-[6px] shrink-0 border-x border-[#dddddd] bg-[#f3f3f3]" />
          <RightSidebar />
        </div>
      </div>
      <FileDialog />
    </div>
  );
}
